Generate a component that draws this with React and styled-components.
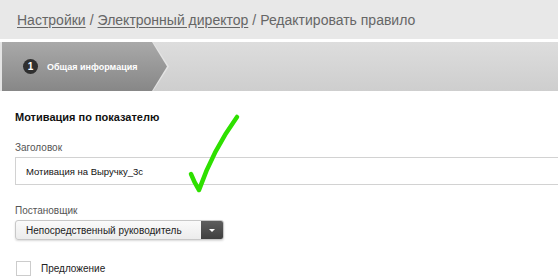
import React from "react";
import styled, { createGlobalStyle } from "styled-components";

const GlobalStyle = createGlobalStyle`
  html, body {
    margin: 0;
    padding: 0;
    background: #fff;
    overflow: hidden;
  }
  body {
    font-family: "Liberation Sans", Arial, sans-serif;
  }
`;

const Page = styled.div`
  position: relative;
  width: 558px;
  height: 277px;
  overflow: hidden;
`;

const Breadcrumbs = styled.div`
  height: 39px;
  background: #e8e8e8;
  border-bottom: 3px solid #fff;
  padding-left: 17px;
  display: flex;
  align-items: center;
  font-size: 14px;
  color: #666;
  white-space: nowrap;
`;

const Crumb = styled.a`
  color: #666;
  text-decoration: underline;
  text-underline-offset: 2px;
`;

const Sep = styled.span`
  margin: 0 4px;
`;

const StepBar = styled.div`
  height: 49px;
  background: linear-gradient(#dddddd, #cecece);
  display: flex;
  align-items: stretch;
`;

const StepOutline = styled.div`
  width: 169px;
  background: #e4e4e4;
  clip-path: polygon(0 0, 153px 0, 169px 50%, 153px 100%, 0 100%);
  display: flex;
`;

const Step = styled.div`
  width: 165px;
  margin-left: 2px;
  background: linear-gradient(#a9a9a9, #878787);
  clip-path: polygon(0 0, 150px 0, 165px 50%, 150px 100%, 0 100%);
  display: flex;
  align-items: center;
  padding-left: 21px;
  box-sizing: border-box;
  gap: 9px;
`;

const StepNum = styled.span`
  width: 15px;
  height: 15px;
  border-radius: 50%;
  background: #2f2f2f;
  color: #fff;
  font-size: 10px;
  font-weight: bold;
  display: flex;
  align-items: center;
  justify-content: center;
`;

const StepLabel = styled.span`
  color: #fff;
  font-size: 9px;
  font-weight: bold;
  white-space: nowrap;
`;

const Content = styled.div`
  padding: 20px 0 0 15px;
`;

const Title = styled.div`
  font-size: 11px;
  font-weight: bold;
  color: #111;
  margin-bottom: 19px;
`;

const Label = styled.div`
  font-size: 10px;
  color: #555;
  margin-bottom: 4px;
`;

const TextInput = styled.div`
  width: 600px;
  height: 28px;
  border: 1px solid #d2d2d2;
  box-sizing: border-box;
  padding-left: 10px;
  display: flex;
  align-items: center;
  font-size: 9.5px;
  color: #111;
  margin-bottom: 20px;
`;

const Select = styled.div`
  width: 209px;
  height: 20px;
  border: 1px solid #c8c8c8;
  border-radius: 3px;
  box-shadow: 0 1px 2px rgba(0, 0, 0, 0.15);
  background: linear-gradient(#fafafa, #ececec);
  display: flex;
  align-items: stretch;
  box-sizing: border-box;
  overflow: hidden;
  margin-bottom: 21px;
`;

const SelectValue = styled.div`
  flex: 1;
  padding-left: 10px;
  font-size: 10px;
  color: #222;
  display: flex;
  align-items: center;
  white-space: nowrap;
`;

const SelectButton = styled.div`
  width: 22px;
  background: linear-gradient(#5e5e5e, #3f3f3f);
  display: flex;
  align-items: center;
  justify-content: center;
`;

const Caret = styled.span`
  width: 0;
  height: 0;
  border-left: 3px solid transparent;
  border-right: 3px solid transparent;
  border-top: 3px solid #fff;
`;

const CheckRow = styled.label`
  display: flex;
  align-items: center;
  gap: 10px;
  font-size: 10px;
  color: #222;
  margin-left: 1px;
`;

const CheckBox = styled.span`
  width: 15px;
  height: 15px;
  border: 1px solid #ccc;
  box-sizing: border-box;
  background: #fff;
`;

const Mark = styled.svg`
  position: absolute;
  left: 185px;
  top: 110px;
`;

export default function App() {
  return (
    <Page>
      <GlobalStyle />
      <Breadcrumbs>
        <Crumb>Настройки</Crumb>
        <Sep>/</Sep>
        <Crumb>Электронный директор</Crumb>
        <Sep>/</Sep>
        <span>Редактировать правило</span>
      </Breadcrumbs>
      <StepBar>
        <StepOutline>
          <Step>
            <StepNum>1</StepNum>
            <StepLabel>Общая информация</StepLabel>
          </Step>
        </StepOutline>
      </StepBar>
      <Content>
        <Title>Мотивация по показателю</Title>
        <Label>Заголовок</Label>
        <TextInput>Мотивация на Выручку_3с</TextInput>
        <Label>Постановщик</Label>
        <Select>
          <SelectValue>Непосредственный руководитель</SelectValue>
          <SelectButton>
            <Caret />
          </SelectButton>
        </Select>
        <CheckRow>
          <CheckBox />
          Предложение
        </CheckRow>
      </Content>
      <Mark width="60" height="90" viewBox="0 0 60 90">
        <path
          d="M6 64 Q9 72 14 80 Q28 40 52 7"
          fill="none"
          stroke="#2ee000"
          strokeWidth="4.5"
          strokeLinecap="round"
          strokeLinejoin="round"
        />
      </Mark>
    </Page>
  );
}
